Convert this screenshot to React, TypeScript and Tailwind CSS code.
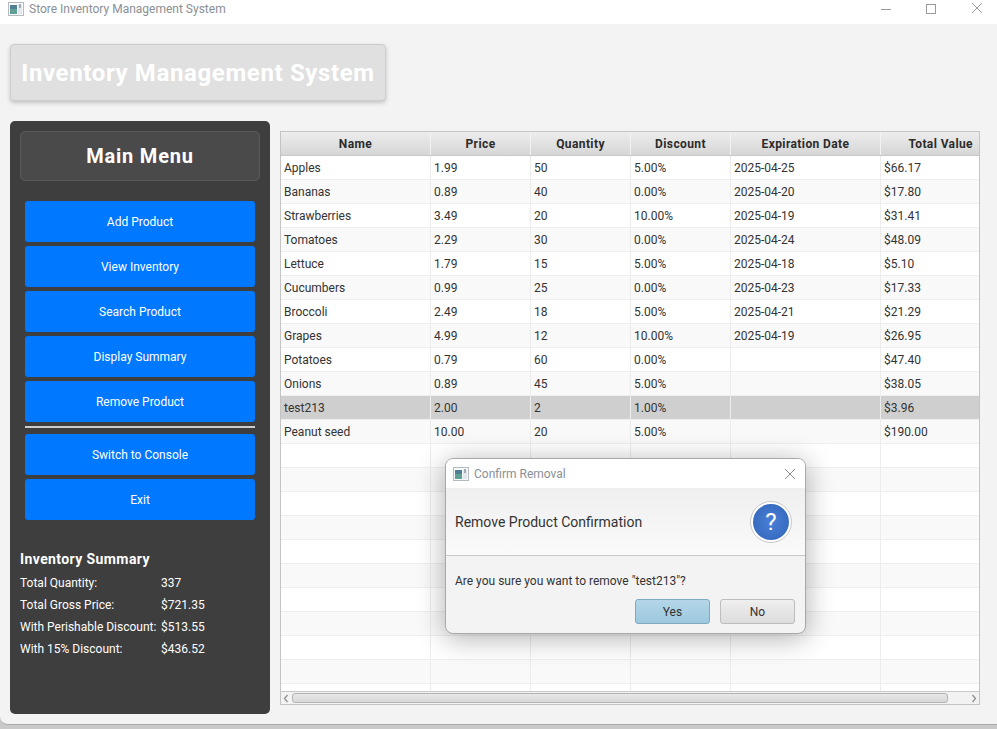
const products = [
  ["Apples", "1.99", "50", "5.00%", "2025-04-25", "$66.17"],
  ["Bananas", "0.89", "40", "0.00%", "2025-04-20", "$17.80"],
  ["Strawberries", "3.49", "20", "10.00%", "2025-04-19", "$31.41"],
  ["Tomatoes", "2.29", "30", "0.00%", "2025-04-24", "$48.09"],
  ["Lettuce", "1.79", "15", "5.00%", "2025-04-18", "$5.10"],
  ["Cucumbers", "0.99", "25", "0.00%", "2025-04-23", "$17.33"],
  ["Broccoli", "2.49", "18", "5.00%", "2025-04-21", "$21.29"],
  ["Grapes", "4.99", "12", "10.00%", "2025-04-19", "$26.95"],
  ["Potatoes", "0.79", "60", "0.00%", "", "$47.40"],
  ["Onions", "0.89", "45", "5.00%", "", "$38.05"],
  ["test213", "2.00", "2", "1.00%", "", "$3.96"],
  ["Peanut seed", "10.00", "20", "5.00%", "", "$190.00"],
  ["", "", "", "", "", ""],
  ["", "", "", "", "", ""],
  ["", "", "", "", "", ""],
  ["", "", "", "", "", ""],
  ["", "", "", "", "", ""],
  ["", "", "", "", "", ""],
  ["", "", "", "", "", ""],
  ["", "", "", "", "", ""],
  ["", "", "", "", "", ""],
  ["", "", "", "", "", ""],
  ["", "", "", "", "", ""],
];

const columns = [
  { name: "Name", width: "w-[150px]" },
  { name: "Price", width: "w-[100px]" },
  { name: "Quantity", width: "w-[100px]" },
  { name: "Discount", width: "w-[100px]" },
  { name: "Expiration Date", width: "w-[150px]" },
  { name: "Total Value", width: "flex-1" },
];

const menuTop = ["Add Product", "View Inventory", "Search Product", "Display Summary", "Remove Product"];
const menuBottom = ["Switch to Console", "Exit"];

const summary = [
  ["Total Quantity:", "337"],
  ["Total Gross Price:", "$721.35"],
  ["With Perishable Discount:", "$513.55"],
  ["With 15% Discount:", "$436.52"],
];

function JavaIcon() {
  return (
    <svg width="16" height="14" viewBox="0 0 16 14" className="shrink-0">
      <rect x="0.5" y="0.5" width="15" height="13" fill="#f7f8f9" stroke="#b4bac0" />
      <rect x="2" y="3" width="7" height="9" fill="#5f9f94" />
      <rect x="2" y="3" width="7" height="4" fill="#4f7f92" />
      <rect x="10" y="3" width="4" height="9" fill="#e4e7ea" />
      <rect x="11" y="2" width="2" height="4" fill="#a4acb3" />
    </svg>
  );
}

function MenuButton({ label }: { label: string }) {
  return (
    <button className="h-[41px] w-[230px] rounded-[3px] bg-[#0078ff] text-[12px] text-white">{label}</button>
  );
}

function Sidebar() {
  return (
    <div className="flex h-[593px] w-[260px] flex-col rounded-[5px] bg-[#3e3e3e] p-[10px]">
      <div className="flex h-[50px] items-center justify-center rounded-[5px] border border-[#5a5a5a] bg-[#4a4a4a] text-[20px] font-bold tracking-[0.8px] text-white">
        Main Menu
      </div>
      <div className="mt-[20px] flex flex-col items-center gap-[4px]">
        {menuTop.map((label) => (
          <MenuButton key={label} label={label} />
        ))}
      </div>
      <div className="mx-[5px] mt-[4px] mb-[6px] h-[2px] bg-[#cccccc]" />
      <div className="flex flex-col items-center gap-[4px]">
        {menuBottom.map((label) => (
          <MenuButton key={label} label={label} />
        ))}
      </div>
      <div className="mt-[30px] text-[14px] leading-[19px] font-bold tracking-[0.4px] text-white">
        Inventory Summary
      </div>
      <div className="mt-[3px] flex flex-col text-[12px] leading-[22px] text-white">
        {summary.map(([label, value]) => (
          <div key={label} className="flex">
            <span className="w-[141px] whitespace-nowrap">{label}</span>
            <span>{value}</span>
          </div>
        ))}
      </div>
    </div>
  );
}

function ProductTable() {
  return (
    <div className="flex h-[574px] w-[700px] flex-col border border-[#c4c4c4] bg-white">
      <div className="flex h-[24px] shrink-0 border-b border-[#c8c8c8] bg-gradient-to-b from-[#ededed] to-[#d6d6d6] text-[12px] font-bold tracking-[0.4px] text-[#2c2c2c]">
        {columns.map((col) => (
          <div
            key={col.name}
            className={`${col.width} flex items-center border-r border-[#f2f2f2] last:border-r-0 ${
              col.name === "Total Value" ? "justify-end pr-[6px]" : "justify-center"
            }`}
          >
            {col.name}
          </div>
        ))}
      </div>
      <div className="min-h-0 flex-1 overflow-hidden">
        {products.map((row, i) => (
          <div
            key={i}
            className={`flex h-[24px] border-b border-[#efefef] text-[12px] text-[#333333] ${
              row[0] === "test213" ? "bg-[#cfcfcf]" : i % 2 === 0 ? "bg-white" : "bg-[#f9f9f9]"
            }`}
          >
            {columns.map((col, j) => (
              <div
                key={col.name}
                className={`${col.width} flex items-center border-r border-[#ececec] pl-[3px] last:border-r-0`}
              >
                {row[j]}
              </div>
            ))}
          </div>
        ))}
      </div>
      <div className="flex h-[13px] shrink-0 items-center border-t border-[#c8c8c8] bg-[#f2f2f2]">
        <svg width="11" height="11" viewBox="0 0 11 11" className="shrink-0">
          <path d="M6.5 2 L3.5 5.5 L6.5 9" fill="none" stroke="#8c8c8c" strokeWidth="1.2" />
        </svg>
        <div className="h-[10px] w-[656px] rounded-[3px] border border-[#b4b4b4] bg-gradient-to-b from-[#e8e8e8] to-[#d8d8d8]" />
        <div className="flex-1" />
        <svg width="11" height="11" viewBox="0 0 11 11" className="shrink-0">
          <path d="M4.5 2 L7.5 5.5 L4.5 9" fill="none" stroke="#8c8c8c" strokeWidth="1.2" />
        </svg>
      </div>
    </div>
  );
}

function ConfirmDialog() {
  return (
    <div className="absolute top-[458px] left-[445px] flex h-[176px] w-[361px] flex-col overflow-hidden rounded-[8px] border border-[#a8a8a8] bg-[#f3f3f3] shadow-[0_4px_28px_rgba(0,0,0,0.32)]">
      <div className="flex h-[29px] shrink-0 items-center gap-[5px] bg-white pr-[9px] pl-[7px] text-[12px] text-[#8a8f96]">
        <JavaIcon />
        <span className="flex-1">Confirm Removal</span>
        <svg width="12" height="12" viewBox="0 0 12 12">
          <path d="M1 1 L11 11 M11 1 L1 11" stroke="#8c8c8c" strokeWidth="1" />
        </svg>
      </div>
      <div className="flex h-[68px] shrink-0 items-center justify-between border-b border-[#c8c8c8] bg-gradient-to-b from-[#efefef] to-[#fafafa] pt-[1px] pr-[13px] pl-[9px] text-[14px] text-[#333333]">
        <span>Remove Product Confirmation</span>
        <div className="flex h-[42px] w-[42px] items-center justify-center rounded-full border border-[#c8c8c8] bg-white">
          <div className="flex h-[36px] w-[36px] items-center justify-center rounded-full bg-[radial-gradient(circle,#4a7fd6,#2f64b8)] text-[24px] text-white">
            ?
          </div>
        </div>
      </div>
      <div className="pt-[17px] pl-[9px] text-[12px] leading-[16px] text-[#333333]">
        Are you sure you want to remove "test213"?
      </div>
      <div className="mt-[10px] flex justify-end gap-[10px] pr-[10px] text-[12px] text-[#333333]">
        <button className="h-[25px] w-[75px] rounded-[3px] border border-[#7fa9bf] bg-gradient-to-b from-[#b4d6e8] to-[#9cc8df]">
          Yes
        </button>
        <button className="h-[25px] w-[75px] rounded-[3px] border border-[#bdbdbd] bg-gradient-to-b from-[#efefef] to-[#dcdcdc]">
          No
        </button>
      </div>
    </div>
  );
}

export default function App() {
  return (
    <div className="relative h-[729px] w-[997px] overflow-hidden bg-[#c9c9c9] font-['Roboto','Noto_Sans',sans-serif]">
      <div className="flex h-[725px] flex-col overflow-hidden rounded-bl-[8px] border-b border-[#a9a9a9] bg-[#f3f3f3]">
        <div className="flex h-[24px] shrink-0 items-center bg-white pb-[6px] pl-[8px] text-[12px] text-[#8a8f96]">
          <JavaIcon />
          <span className="ml-[5px] flex-1">Store Inventory Management System</span>
          <svg width="110" height="14" viewBox="0 0 110 14" className="mr-[6px] mb-[2px] shrink-0">
            <path d="M0 8.5 H10" stroke="#9a9a9a" strokeWidth="1" />
            <rect x="45.5" y="3.5" width="9" height="9" fill="none" stroke="#9a9a9a" />
            <path d="M91 2 L101 12 M101 2 L91 12" stroke="#9a9a9a" strokeWidth="1" />
          </svg>
        </div>
        <div className="flex flex-col px-[10px] pt-[20px]">
          <div className="flex h-[57px] w-[376px] items-center justify-center rounded-[4px] border border-[#cdcdcd] bg-[#e0e0e0] text-[24px] font-bold tracking-[0.63px] whitespace-nowrap text-white shadow-[0_2px_4px_rgba(0,0,0,0.2)]">
            Inventory Management System
          </div>
          <div className="mt-[20px] flex items-start gap-[10px]">
            <Sidebar />
            <div className="mt-[10px]">
              <ProductTable />
            </div>
          </div>
        </div>
      </div>
      <ConfirmDialog />
    </div>
  );
}
